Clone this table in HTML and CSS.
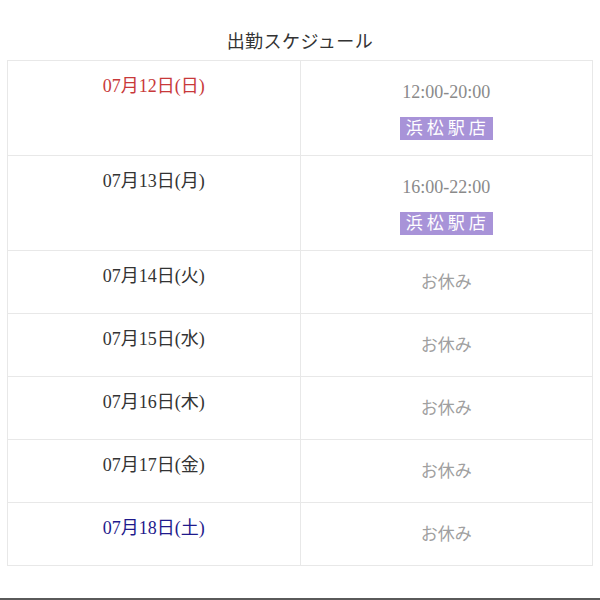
FILE: index.html
```html
<!DOCTYPE html>
<html lang="ja">
<head>
<meta charset="utf-8">
<title>出勤スケジュール</title>
<link rel="stylesheet" href="styles.css">
</head>
<body>
<main class="page">
  <h2 class="title">出勤スケジュール</h2>
  <table class="schedule">
    <tr class="row tall">
      <td class="date sun">07月12日(日)</td>
      <td class="shift">
        <div class="time">12:00-20:00</div>
        <div class="badge">浜松駅店</div>
      </td>
    </tr>
    <tr class="row tall">
      <td class="date">07月13日(月)</td>
      <td class="shift">
        <div class="time">16:00-22:00</div>
        <div class="badge">浜松駅店</div>
      </td>
    </tr>
    <tr class="row">
      <td class="date">07月14日(火)</td>
      <td class="shift"><div class="off">お休み</div></td>
    </tr>
    <tr class="row">
      <td class="date">07月15日(水)</td>
      <td class="shift"><div class="off">お休み</div></td>
    </tr>
    <tr class="row">
      <td class="date">07月16日(木)</td>
      <td class="shift"><div class="off">お休み</div></td>
    </tr>
    <tr class="row">
      <td class="date">07月17日(金)</td>
      <td class="shift"><div class="off">お休み</div></td>
    </tr>
    <tr class="row">
      <td class="date sat">07月18日(土)</td>
      <td class="shift"><div class="off">お休み</div></td>
    </tr>
  </table>
  <div class="bottom-bar"></div>
</main>
</body>
</html>
```

FILE: styles.css
```css
html, body {
  margin: 0;
  padding: 0;
  background: #ffffff;
}

body {
  font-family: "Liberation Serif", "Noto Sans CJK JP", serif;
  color: #333333;
}

.page {
  display: flex;
  flex-direction: column;
  height: 600px;
}

.title {
  margin: 0;
  padding-top: 30px;
  height: 30px;
  font-size: 18px;
  font-weight: normal;
  line-height: 24px;
  text-align: center;
  color: #333333;
  letter-spacing: 0.5px;
}

.schedule {
  margin: 0 7px;
  width: 586px;
  border-collapse: collapse;
  table-layout: fixed;
}

.schedule td {
  border: 1px solid #e8e8e8;
  text-align: center;
  padding: 0;
}

.row {
  height: 63px;
}

.row.tall {
  height: 95px;
}

.date {
  vertical-align: top;
  padding-top: 13px !important;
  font-size: 18px;
  line-height: 24px;
  color: #333333;
}

.date.sun {
  color: #c8393a;
}

.date.sat {
  color: #1f1a8c;
}

.shift {
  vertical-align: middle;
}

.time {
  font-size: 18px;
  line-height: 24px;
  color: #8a8a8a;
  margin-top: 4px;
}

.badge {
  display: inline-block;
  margin-top: 13px;
  padding: 0 3px 0 6px;
  height: 23px;
  line-height: 23px;
  font-size: 17px;
  letter-spacing: 4px;
  color: #ffffff;
  background: #a893d8;
}

.off {
  font-size: 17px;
  line-height: 24px;
  color: #a0a0a0;
  padding-top: 2px;
}

.bottom-bar {
  margin-top: auto;
  height: 2px;
  background: #5a5a5a;
}
```
